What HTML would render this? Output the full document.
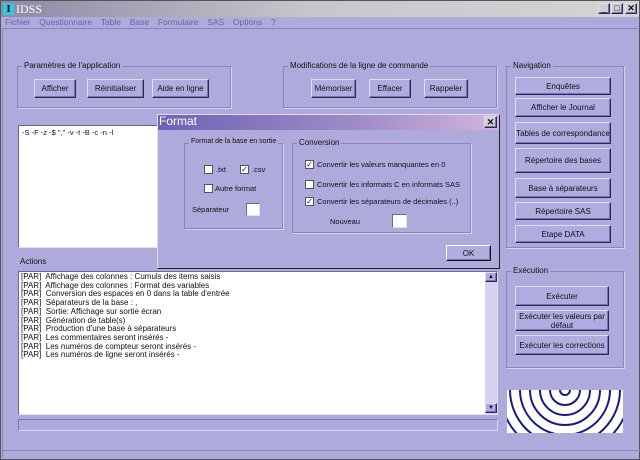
<!DOCTYPE html><html><head><meta charset="utf-8"><style>
*{margin:0;padding:0;box-sizing:border-box}
body{width:640px;height:460px;background:#aeaadc;font-family:"Liberation Sans",sans-serif;font-size:8px;color:#111;position:relative;overflow:hidden}
.a{position:absolute}
.grp{position:absolute;border:1px solid #8a86b8;box-shadow:1px 1px 0 #d4d2f0}
.grp>span{position:absolute;top:-6px;left:4px;background:#aeaadc;padding:0 2px;font-size:8px;white-space:nowrap}
.btn{position:absolute;background:#b0acdf;border:1px solid;border-color:#dedcf6 #2a2860 #2a2860 #dedcf6;box-shadow:inset -1px -1px 0 #7874aa;text-align:center;font-size:8px;display:flex;align-items:center;justify-content:center;line-height:9px}
.wh{position:absolute;background:#fff;border:1px solid;border-color:#6a66a0 #e0def6 #e0def6 #6a66a0}
.cb{position:absolute;width:9px;height:9px;background:#fff;border:1px solid #555;font-size:8px;line-height:7px;text-align:center}
.lbl{position:absolute;font-size:7.5px;white-space:nowrap}
</style></head><body>
<div class="a" style="left:0;top:0;width:640px;height:460px;border:1px solid #555"></div>
<div class="a" style="left:1px;top:1px;width:638px;height:16px;background:linear-gradient(90deg,#8c8aa6,#c8c8cc 50%,#d4d4d4)"></div>
<div class="a" style="left:3px;top:3px;width:11px;height:12px;background:#34c8e0;font:bold 11px 'Liberation Serif',serif;color:#000;text-align:center;line-height:12px">I</div>
<div class="a" style="left:16px;top:2px;font:12px 'Liberation Serif',serif;color:#fff">IDSS</div>
<div class="btn" style="left:598px;top:3px;width:12px;height:11px;background:#d0d0d0;font-size:9px">_</div>
<div class="btn" style="left:611px;top:3px;width:12px;height:11px;background:#d0d0d0;font-size:9px">□</div>
<div class="btn" style="left:625px;top:3px;width:12px;height:11px;background:#d0d0d0;font-size:9px;font-weight:bold">✕</div>
<div class="a" style="left:5px;top:17px;font-size:8.5px;color:#6a66a0;word-spacing:2px;white-space:nowrap">Fichier&nbsp; Questionnaire&nbsp; Table&nbsp; Base&nbsp; Formulaire&nbsp; SAS&nbsp; Options&nbsp; ?</div>
<div class="a" style="left:2px;top:28px;width:636px;height:1px;background:#8a86b8"></div>
<div class="a" style="left:2px;top:29px;width:1px;height:428px;background:#8a86b8"></div>

<div class="grp" style="left:17px;top:66px;width:214px;height:42px"><span>Paramètres de l'application</span></div>
<div class="btn" style="left:34px;top:79px;width:42px;height:19px">Afficher</div>
<div class="btn" style="left:87px;top:79px;width:57px;height:19px">Réinitialiser</div>
<div class="btn" style="left:152px;top:79px;width:57px;height:19px">Aide en ligne</div>

<div class="grp" style="left:283px;top:66px;width:214px;height:42px"><span>Modifications de la ligne de commande</span></div>
<div class="btn" style="left:311px;top:79px;width:45px;height:19px">Mémoriser</div>
<div class="btn" style="left:369px;top:79px;width:42px;height:19px">Effacer</div>
<div class="btn" style="left:424px;top:79px;width:44px;height:19px">Rappeler</div>

<div class="grp" style="left:506px;top:66px;width:118px;height:182px"><span>Navigation</span></div>
<div class="btn" style="left:515px;top:77px;width:96px;height:18px">Enquêtes</div>
<div class="btn" style="left:515px;top:98px;width:96px;height:19px">Afficher le Journal</div>
<div class="btn" style="left:515px;top:122px;width:96px;height:22px">Tables de correspondance</div>
<div class="btn" style="left:515px;top:148px;width:96px;height:25px">Répertoire des bases</div>
<div class="btn" style="left:515px;top:178px;width:96px;height:20px">Base à séparateurs</div>
<div class="btn" style="left:515px;top:202px;width:96px;height:18px">Répertoire SAS</div>
<div class="btn" style="left:515px;top:225px;width:96px;height:18px">Etape DATA</div>

<div class="wh" style="left:18px;top:125px;width:141px;height:123px"></div>
<div class="lbl" style="left:22px;top:128px">-S -F -z -$ "," -v -t -B -c -n -l</div>
<div class="a" style="left:158px;top:248px;width:340px;height:2px;background:#2a2860"></div>

<div class="lbl" style="left:20px;top:257px;font-size:8px">Actions</div>
<div class="wh" style="left:18px;top:271px;width:480px;height:144px"></div>
<div class="a" style="left:485px;top:272px;width:12px;height:142px;background:#d4d2ee"></div>
<div class="btn" style="left:485px;top:272px;width:12px;height:10px;font-size:6px">▲</div>
<div class="btn" style="left:485px;top:403px;width:12px;height:10px;font-size:6px">▼</div>
<div class="a" style="left:21px;top:273px;font-size:8px;line-height:8.7px;white-space:pre">[PAR]  Affichage des colonnes : Cumuls des items saisis
[PAR]  Affichage des colonnes : Format des variables
[PAR]  Conversion des espaces en 0 dans la table d'entrée
[PAR]  Séparateurs de la base : ,
[PAR]  Sortie: Affichage sur sortie écran
[PAR]  Génération de table(s)
[PAR]  Production d'une base à séparateurs
[PAR]  Les commentaires seront insérés -
[PAR]  Les numéros de compteur seront insérés -
[PAR]  Les numéros de ligne seront insérés -</div>
<div class="a" style="left:18px;top:419px;width:480px;height:12px;border:1px solid;border-color:#7a76b0 #d8d6f2 #d8d6f2 #7a76b0"></div>

<div class="grp" style="left:506px;top:271px;width:118px;height:97px"><span>Exécution</span></div>
<div class="btn" style="left:515px;top:286px;width:94px;height:20px">Exécuter</div>
<div class="btn" style="left:515px;top:310px;width:94px;height:21px">Exécuter les valeurs par défaut</div>
<div class="btn" style="left:515px;top:335px;width:94px;height:20px">Exécuter les corrections</div>
<svg class="a" style="left:507px;top:390px" width="116" height="43" viewBox="0 0 116 43"><rect width="116" height="43" fill="#fff"/><g fill="none" stroke="#1a1a80" stroke-width="2">
<circle cx="58" cy="0" r="5"/><circle cx="58" cy="0" r="15"/><circle cx="58" cy="0" r="25"/><circle cx="58" cy="0" r="35"/><circle cx="58" cy="0" r="45"/><circle cx="58" cy="0" r="55"/><circle cx="58" cy="0" r="65"/><circle cx="58" cy="0" r="75"/></g></svg>
<div class="a" style="left:0;top:450px;width:640px;height:1px;background:#8a86b8"></div>

<!-- dialog -->
<div class="a" style="left:157px;top:114px;width:343px;height:155px;background:#aeaadc;border:1px solid;border-color:#dedcf6 #222 #222 #dedcf6"></div>
<div class="a" style="left:158px;top:115px;width:341px;height:15px;background:linear-gradient(90deg,#6e62b4,#a08cc8 60%,#d2b4dc)"></div>
<div class="a" style="left:159px;top:114px;font-size:12px;color:#fff">Format</div>
<div class="btn" style="left:484px;top:116px;width:13px;height:12px;background:#d0d0d0;font-size:9px;font-weight:bold">✕</div>
<div class="grp" style="left:184px;top:143px;width:99px;height:86px"><span style="font-size:7px">Format de la base en sortie</span></div>
<div class="cb" style="left:204px;top:165px"></div><div class="lbl" style="left:216px;top:165px">.txt</div>
<div class="cb" style="left:240px;top:165px">✓</div><div class="lbl" style="left:252px;top:165px">.csv</div>
<div class="cb" style="left:204px;top:184px"></div><div class="lbl" style="left:215px;top:184px">Autre format</div>
<div class="lbl" style="left:192px;top:205px">Séparateur</div>
<div class="wh" style="left:246px;top:203px;width:14px;height:13px"></div>
<div class="grp" style="left:292px;top:143px;width:179px;height:90px"><span>Conversion</span></div>
<div class="cb" style="left:305px;top:160px">✓</div><div class="lbl" style="left:317px;top:160px">Convertir les valeurs manquantes en 0</div>
<div class="cb" style="left:305px;top:180px"></div><div class="lbl" style="left:317px;top:180px">Convertir les informats C en informats SAS</div>
<div class="cb" style="left:305px;top:197px">✓</div><div class="lbl" style="left:317px;top:197px">Convertir les séparateurs de décimales (..)</div>
<div class="lbl" style="left:330px;top:217px">Nouveau</div>
<div class="wh" style="left:392px;top:214px;width:15px;height:14px"></div>
<div class="btn" style="left:446px;top:245px;width:45px;height:16px;border-color:#fff #111 #111 #fff">OK</div>
</body></html>
